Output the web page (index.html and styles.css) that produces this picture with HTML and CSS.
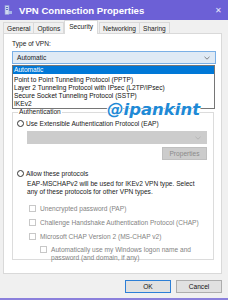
FILE: index.html
```html
<!DOCTYPE html>
<html>
<head>
<meta charset="utf-8">
<link rel="stylesheet" href="styles.css">
</head>
<body>
<div class="window">
  <div class="titlebar">
    <svg class="appicon" width="9" height="10" viewBox="0 0 9 10"><rect x="1" y="0.5" width="4" height="9" fill="#cfd8f0" stroke="#8e9bd8" stroke-width="0.6"/><rect x="2" y="2" width="2" height="1" fill="#5a6fc0"/><rect x="2" y="4" width="2" height="1" fill="#5a6fc0"/><rect x="5" y="6" width="3" height="3" fill="#a6b4e8"/></svg>
    <span class="title">VPN Connection Properties</span>
    <span class="close">✕</span>
  </div>
  <div class="tabs">
    <span class="tab">General</span>
    <span class="tab">Options</span>
    <span class="tab active">Security</span>
    <span class="tab">Networking</span>
    <span class="tab">Sharing</span>
  </div>
  <div class="panel">
    <div class="label">Type of VPN:</div>
    <div class="select focused"><span>Automatic</span><svg class="chev" width="6" height="4" viewBox="0 0 6 4"><path d="M0.5 0.8 L3 3.2 L5.5 0.8" fill="none" stroke="#555" stroke-width="0.7"/></svg></div>
    <div class="spacer"></div>
    <fieldset class="group">
      <legend>Authentication</legend>
      <div class="radio-row"><span class="radio"></span><span>Use Extensible Authentication Protocol (EAP)</span></div>
      <div class="select disabled"><span></span><svg class="chev" width="6" height="4" viewBox="0 0 6 4"><path d="M0.5 0.8 L3 3.2 L5.5 0.8" fill="none" stroke="#aaa" stroke-width="0.7"/></svg></div>
      <div class="props-row"><span class="btn-disabled">Properties</span></div>
      <div class="radio-row allow"><span class="radio"></span><span>Allow these protocols</span></div>
      <div class="desc">EAP-MSCHAPv2 will be used for IKEv2 VPN type. Select<br>any of these protocols for other VPN types.</div>
      <div class="check-row first"><span class="check"></span><span>Unencrypted password (PAP)</span></div>
      <div class="check-row"><span class="check"></span><span>Challenge Handshake Authentication Protocol (CHAP)</span></div>
      <div class="check-row"><span class="check"></span><span>Microsoft CHAP Version 2 (MS-CHAP v2)</span></div>
      <div class="check-row sub"><span class="check"></span><span>Automatically use my Windows logon name and<br>password (and domain, if any)</span></div>
    </fieldset>
  </div>
  <div class="buttons">
    <span class="btn default">OK</span>
    <span class="btn">Cancel</span>
  </div>
  <ul class="droplist">
    <li class="sel">Automatic</li>
    <li>Point to Point Tunneling Protocol (PPTP)</li>
    <li>Layer 2 Tunneling Protocol with IPsec (L2TP/IPsec)</li>
    <li>Secure Socket Tunneling Protocol (SSTP)</li>
    <li>IKEv2</li>
  </ul>
  <div class="watermark">@ipankint</div>
</div>
</body>
</html>
```
FILE: styles.css
```css
* { box-sizing: border-box; }
html, body { margin: 0; padding: 0; }
body { width: 228px; height: 300px; overflow: hidden; font-family: "Liberation Sans", Arial, sans-serif; font-size: 6.6px; color: #1a1a1a; }
.window { position: relative; width: 228px; height: 300px; background: #f0f0f0; border-bottom: 2px solid #8b80dc; display: flex; flex-direction: column; }
.titlebar { height: 20px; background: #6c60d6; display: flex; align-items: center; padding: 0 6px 0 4px; color: #fff; }
.appicon { margin-right: 6px; }
.title { font-weight: bold; font-size: 9.6px; flex: 1; }
.close { font-size: 8px; color: #e8e6fb; }
.tabs { display: flex; align-items: flex-end; padding: 2px 0 0 3px; height: 14px; }
.tab { height: 12px; line-height: 11px; padding: 0 3px; border: 1px solid #d9d9d9; border-bottom: none; margin-right: -1px; background: #f0f0f0; color: #222; }
.tab.active { height: 14px; background: #fff; position: relative; z-index: 1; margin: 0 1px 0 1px; padding: 0 4px; line-height: 12px; }
.panel { margin: -1px 6px 0 3px; height: 241px; background: #fff; border: 1px solid #d9d9d9; padding: 6px 5px 0 8px; display: flex; flex-direction: column; }
.label { line-height: 8px; margin-bottom: 3px; }
.select { height: 13px; border: 1px solid #7eb4ea; background: #e5f1fb; display: flex; align-items: center; justify-content: space-between; padding: 0 5px 0 4px; }
.select.focused { border-color: #7ab0e6; background: #dfeaf5; }
.spacer { height: 44px; }
.group { margin: 0 2px 0 0; border: 1px solid #dcdcdc; padding: 3px 6px 4px 4px; height: 152px; }
.group legend { padding: 0 1px; margin-left: 1px; line-height: 8px; }
.radio-row { display: flex; align-items: center; height: 9px; }
.radio { width: 7px; height: 7px; border: 1px solid #333; border-radius: 50%; margin-right: 2px; background: #fff; }
.group .select.disabled { margin: 3px 0 0 10px; border-color: #cccccc; background: #cccccc; }
.props-row { display: flex; justify-content: flex-end; margin-top: 3px; }
.btn-disabled { width: 45px; height: 13px; background: #cccccc; border: 1px solid #bfbfbf; color: #8a8a8a; display: flex; align-items: center; justify-content: center; }
.radio-row.allow { margin-top: 9px; }
.desc { margin: 2px 0 0 10px; line-height: 8px; white-space: nowrap; }
.check-row { display: flex; align-items: flex-start; margin: 6px 0 0 12px; color: #838383; line-height: 8px; white-space: nowrap; }
.check-row.first { margin-top: 9px; }
.check { flex: none; width: 7px; height: 7px; border: 1px solid #c8c8c8; margin: 0 4px 0 0; background: #fff; }
.check-row.sub { margin-left: 23px; margin-top: 5px; }
.buttons { display: flex; justify-content: flex-end; gap: 5px; padding: 6px 6px 0 0; }
.btn { width: 46px; height: 13px; display: flex; align-items: center; justify-content: center; background: #e1e1e1; border: 1px solid #adadad; color: #111; }
.btn.default { border: 1.5px solid #2d7fd6; }
.droplist { position: absolute; left: 12px; top: 65px; width: 203px; margin: 0; padding: 0; list-style: none; background: #fff; border: 1px solid #767676; }
.droplist li { height: 8px; line-height: 8px; padding-left: 1px; color: #111; white-space: nowrap; }
.droplist li.sel { background: #0078d7; color: #fff; margin-bottom: 2px; }
.watermark { position: absolute; left: 107px; top: 100px; font-size: 16.5px; font-weight: bold; font-style: italic; color: #1f8ad6; text-shadow: 1px 0 #fff, -1px 0 #fff, 0 1px #fff, 0 -1px #fff; font-family: "DejaVu Sans", sans-serif; }
```
